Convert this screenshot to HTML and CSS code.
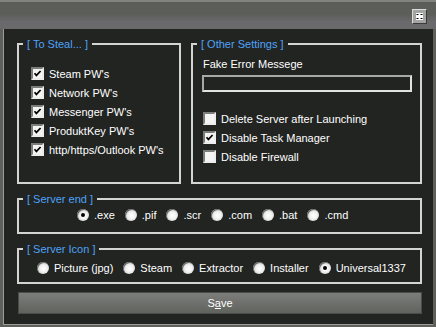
FILE: index.html
```html
<!DOCTYPE html>
<html lang="en">
<head>
    <meta charset="UTF-8">
    <title>Builder</title>
    <link rel="stylesheet" href="styles.css">
</head>
<body>

    <!-- Title strip -->
    <div class="titlebar">
        <button class="tb-btn">
            <svg width="7" height="7" viewBox="0 0 7 7">
                <rect x="0" y="0" width="7" height="7" fill="#fff"/>
                <path d="M0.5 1.5H2.5M4.5 1.5H6.5M0.5 5.5H2.5M4.5 5.5H6.5" stroke="#000" stroke-width="1"/>
            </svg>
        </button>
    </div>

    <div class="window">
        <div class="top-row">
            <!-- To Steal -->
            <fieldset class="group steal">
                <legend>[ To Steal... ]</legend>
                <div class="opts">
                    <label class="opt"><span class="box"><svg viewBox="0 0 9 9"><path d="M1.5 4.3L3.4 6.4L7.6 2"/></svg></span>Steam PW's</label>
                    <label class="opt"><span class="box"><svg viewBox="0 0 9 9"><path d="M1.5 4.3L3.4 6.4L7.6 2"/></svg></span>Network PW's</label>
                    <label class="opt"><span class="box"><svg viewBox="0 0 9 9"><path d="M1.5 4.3L3.4 6.4L7.6 2"/></svg></span>Messenger PW's</label>
                    <label class="opt"><span class="box"><svg viewBox="0 0 9 9"><path d="M1.5 4.3L3.4 6.4L7.6 2"/></svg></span>ProduktKey PW's</label>
                    <label class="opt"><span class="box"><svg viewBox="0 0 9 9"><path d="M1.5 4.3L3.4 6.4L7.6 2"/></svg></span>http/https/Outlook PW's</label>
                </div>
            </fieldset>

            <!-- Other Settings -->
            <fieldset class="group other">
                <legend>[ Other Settings ]</legend>
                <div class="other-body">
                    <div class="field-label">Fake Error Messege</div>
                    <input type="text" class="text-input">
                    <div class="opts">
                        <label class="opt"><span class="box"></span>Delete Server after Launching</label>
                        <label class="opt"><span class="box"><svg viewBox="0 0 9 9"><path d="M1.5 4.3L3.4 6.4L7.6 2"/></svg></span>Disable Task Manager</label>
                        <label class="opt"><span class="box"></span>Disable Firewall</label>
                    </div>
                </div>
            </fieldset>
        </div>

        <!-- Server end -->
        <fieldset class="group ext">
            <legend>[ Server end ]</legend>
            <div class="radios">
                <label class="opt-r"><span class="radio on"></span>.exe</label>
                <label class="opt-r"><span class="radio"></span>.pif</label>
                <label class="opt-r"><span class="radio"></span>.scr</label>
                <label class="opt-r"><span class="radio"></span>.com</label>
                <label class="opt-r"><span class="radio"></span>.bat</label>
                <label class="opt-r"><span class="radio"></span>.cmd</label>
            </div>
        </fieldset>

        <!-- Server Icon -->
        <fieldset class="group icon">
            <legend>[ Server Icon ]</legend>
            <div class="radios">
                <label class="opt-r"><span class="radio"></span>Picture (jpg)</label>
                <label class="opt-r"><span class="radio"></span>Steam</label>
                <label class="opt-r"><span class="radio"></span>Extractor</label>
                <label class="opt-r"><span class="radio"></span>Installer</label>
                <label class="opt-r"><span class="radio on"></span>Universal1337</label>
            </div>
        </fieldset>

        <button class="save">S<u>a</u>ve</button>
    </div>

</body>
</html>
```

FILE: styles.css
```css
* {
    box-sizing: border-box;
}
body {
    margin: 0;
    background: #5f605c;
    font-family: "Liberation Sans", Arial, sans-serif;
    font-size: 11px;
    color: #fff;
}
/* Title strip */
.titlebar {
    height: 29px;
    display: flex;
    justify-content: flex-end;
    align-items: flex-start;
    padding: 9px 9px 0 0;
    background: linear-gradient(#80837e 0, #80837e 2px, #5b5d59 2px, #5c5e5a 14px, #6a696c 22px, #69686b 29px);
}
.tb-btn {
    width: 15px;
    height: 15px;
    padding: 0;
    border: 1px solid;
    border-color: #dcdcdc #3a3a3a #3a3a3a #dcdcdc;
    background: #a4a5a2;
    display: flex;
    align-items: center;
    justify-content: center;
}
/* Dark panel */
.window {
    margin: 0 3px;
    border-left: 1px solid #9a9c98;
    border-bottom: 1px solid #9a9c98;
    background: #222422;
    padding: 8px 11px 10px 13px;
}
.top-row {
    display: flex;
    gap: 10px;
    height: 147px;
}
.group {
    margin: 0;
    padding: 0 0 0 4px;
    border: 2px solid #d4d5d2;
    min-width: 0;
}
legend {
    padding: 0 4px;
    color: #4ea2fa;
    line-height: 14px;
}
.steal {
    flex: 0 0 164px;
}
.other {
    flex: 1;
}
.steal .opts {
    padding: 13px 0 0 8px;
}
.opt {
    display: flex;
    align-items: center;
    gap: 5px;
    height: 19px;
}
.box {
    width: 13px;
    height: 13px;
    border: 2px solid;
    border-color: #7c7c7a #ececec #ececec #7c7c7a;
    background: #f4f4f4;
    display: flex;
    align-items: center;
    justify-content: center;
}
.box svg {
    width: 9px;
    height: 9px;
    fill: none;
    stroke: #000;
    stroke-width: 1.7;
}
.other-body {
    padding: 6px 0 0 6px;
}
.field-label {
    line-height: 14px;
}
.text-input {
    display: block;
    width: 210px;
    height: 17px;
    margin: 4px 0 0 -1px;
    border: 2px solid;
    border-color: #a8a8a6 #e2e2e0 #e2e2e0 #a8a8a6;
    background: #222422;
}
.other .opts {
    margin-top: 17px;
}
/* Radio rows */
.ext,
.icon {
    margin-top: 8px;
}
.radios {
    display: flex;
}
.ext .radios {
    gap: 10px;
    padding: 1px 0 9px 54px;
}
.icon .radios {
    gap: 10px;
    padding: 4px 0 6px 14px;
}
.opt-r {
    display: flex;
    align-items: center;
    gap: 5px;
    height: 16px;
}
.radio {
    width: 12px;
    height: 12px;
    border-radius: 50%;
    background: radial-gradient(circle at 55% 55%, #ffffff 0, #f2f2f2 35%, #b4b4b4 100%);
    box-shadow: inset 1px 1px 0 #666;
    display: flex;
    align-items: center;
    justify-content: center;
}
.radio.on::after {
    content: "";
    width: 4px;
    height: 4px;
    border-radius: 50%;
    background: #000;
}
.save {
    display: block;
    width: 404px;
    height: 22px;
    margin: 8px 0 0 1px;
    border: 1px solid #4a4c48;
    background: linear-gradient(#7d7e7b, #60625e);
    color: #fff;
    font: inherit;
}
```
